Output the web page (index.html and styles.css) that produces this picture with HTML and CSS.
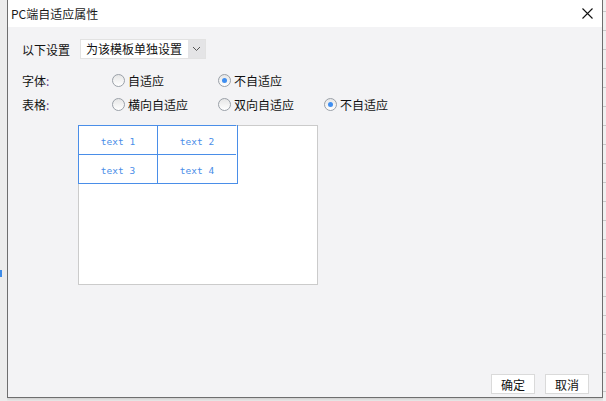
FILE: index.html
```html
<!DOCTYPE html>
<html lang="zh-CN">
<head>
    <meta charset="UTF-8">
    <title>PC端自适应属性</title>
    <link rel="stylesheet" href="styles.css">
</head>
<body>

<div class="screen">
    <div class="side-left"><span class="side-mark"></span></div>

    <div class="dialog">
        <!-- Title bar -->
        <div class="titlebar">
            <span class="title">PC端自适应属性</span>
            <svg class="close" width="11" height="11" viewBox="0 0 11 11">
                <path d="M0.5 0.5 L10.5 10.5 M10.5 0.5 L0.5 10.5" stroke="#111" stroke-width="1.1" fill="none"/>
            </svg>
        </div>

        <div class="dialog-body">
            <div class="row setting-row">
                <span class="label">以下设置</span>
                <div class="select">
                    <span class="select-text">为该模板单独设置</span>
                    <span class="select-arrow">
                        <svg width="9" height="6" viewBox="0 0 9 6"><path d="M1 1 L4.5 4.5 L8 1" stroke="#555" stroke-width="1" fill="none"/></svg>
                    </span>
                </div>
            </div>

            <div class="row option-row">
                <span class="label wide">字体<span class="colon">:</span></span>
                <label class="option"><span class="radio"></span>自适应</label>
                <label class="option"><span class="radio checked"></span>不自适应</label>
            </div>

            <div class="row option-row">
                <span class="label wide">表格<span class="colon">:</span></span>
                <label class="option"><span class="radio"></span>横向自适应</label>
                <label class="option"><span class="radio"></span>双向自适应</label>
                <label class="option"><span class="radio checked"></span>不自适应</label>
            </div>

            <!-- Preview -->
            <div class="preview">
                <div class="preview-grid">
                    <div class="cell">text 1</div>
                    <div class="cell">text 2</div>
                    <div class="cell">text 3</div>
                    <div class="cell">text 4</div>
                </div>
            </div>
        </div>

        <div class="footer">
            <button class="btn">确定</button>
            <button class="btn">取消</button>
        </div>
    </div>

    <div class="side-right"></div>
</div>

</body>
</html>
```

FILE: styles.css
```css
body {
    margin: 0;
    font-family: "Noto Sans CJK SC", "Liberation Sans", sans-serif;
    font-size: 12px;
    color: #111;
    background-color: #ebebeb;
    overflow: hidden;
}

.screen {
    display: flex;
    height: 401px;
}

.side-left {
    width: 7px;
    position: relative;
    background-color: #ececec;
}

.side-mark {
    position: absolute;
    left: 0;
    top: 270px;
    width: 2px;
    height: 7px;
    background-color: #3d8be8;
}

.side-right {
    flex: 1;
    background-color: #f0f0f0;
    background-image: repeating-linear-gradient(to bottom, transparent 0, transparent 11px, #c9c9c9 11px, #c9c9c9 12px, transparent 12px, transparent 19px);
}

.dialog {
    width: 594px;
    height: 397px;
    display: flex;
    flex-direction: column;
    background-color: #f3f3f5;
    border: 1px solid #6e6e6e;
    border-top: none;
    box-shadow: 0 0 4px rgba(0,0,0,.25);
}

.titlebar {
    height: 27px;
    display: flex;
    align-items: center;
    justify-content: space-between;
    padding: 0 8px 0 3px;
    background-color: #fff;
}

.title {
    font-size: 12px;
    color: #1a1a1a;
}

.close { margin-right: 1px; }

.dialog-body {
    padding: 12px 0 0 14px;
}

.row {
    display: flex;
    align-items: center;
    white-space: nowrap;
}

.setting-row {
    height: 20px;
}

.option-row {
    height: 24px;
}

.setting-row + .option-row { margin-top: 9px; }

.label {
    width: 58px;
    flex-shrink: 0;
}

.label.wide {
    width: 90px;
}

.colon { color: #6b3e8e; }

.select {
    display: flex;
    flex-shrink: 0;
    height: 20px;
    width: 126px;
    background-color: #fff;
    border: 1px solid #e2e2e2;
    box-sizing: border-box;
}

.select-text {
    flex: 1;
    padding-left: 5px;
    line-height: 18px;
}

.select-arrow {
    width: 17px;
    display: flex;
    align-items: center;
    justify-content: center;
    background-color: #e4e4e6;
}

.option {
    width: 106px;
    flex-shrink: 0;
    display: flex;
    align-items: center;
    gap: 3px;
}

.radio {
    width: 11px;
    height: 11px;
    border-radius: 50%;
    border: 1px solid #9aa0a8;
    background: linear-gradient(#e6e6e6, #fff);
    position: relative;
}

.radio.checked::after {
    content: "";
    position: absolute;
    left: 3px;
    top: 3px;
    width: 5px;
    height: 5px;
    border-radius: 50%;
    background-color: #3f8ef0;
}

.preview {
    margin: 9px 0 0 56px;
    width: 238px;
    height: 158px;
    background-color: #fff;
    border: 1px solid #cbcbcb;
}

.preview-grid {
    display: grid;
    grid-template-columns: 79px 79px;
    grid-auto-rows: 29px;
    width: 159px;
    margin: -1px 0 0 -1px;
    border-right: 1px solid #4a8ee8;
    border-bottom: 1px solid #4a8ee8;
}

.cell {
    border-left: 1px solid #4a8ee8;
    border-top: 1px solid #4a8ee8;
    display: flex;
    align-items: center;
    justify-content: center;
    padding-top: 2px;
    box-sizing: border-box;
    font-family: "DejaVu Sans Mono", monospace;
    font-size: 9.5px;
    color: #4a8ee8;
}

.footer {
    margin-top: auto;
    display: flex;
    justify-content: flex-end;
    gap: 10px;
    padding: 0 13px 3px 0;
}

.btn {
    width: 44px;
    height: 20px;
    padding: 0;
    font-family: "Noto Sans CJK SC", sans-serif;
    font-size: 12px;
    color: #111;
    background-color: #fff;
    border: 1px solid #dadada;
}
```
